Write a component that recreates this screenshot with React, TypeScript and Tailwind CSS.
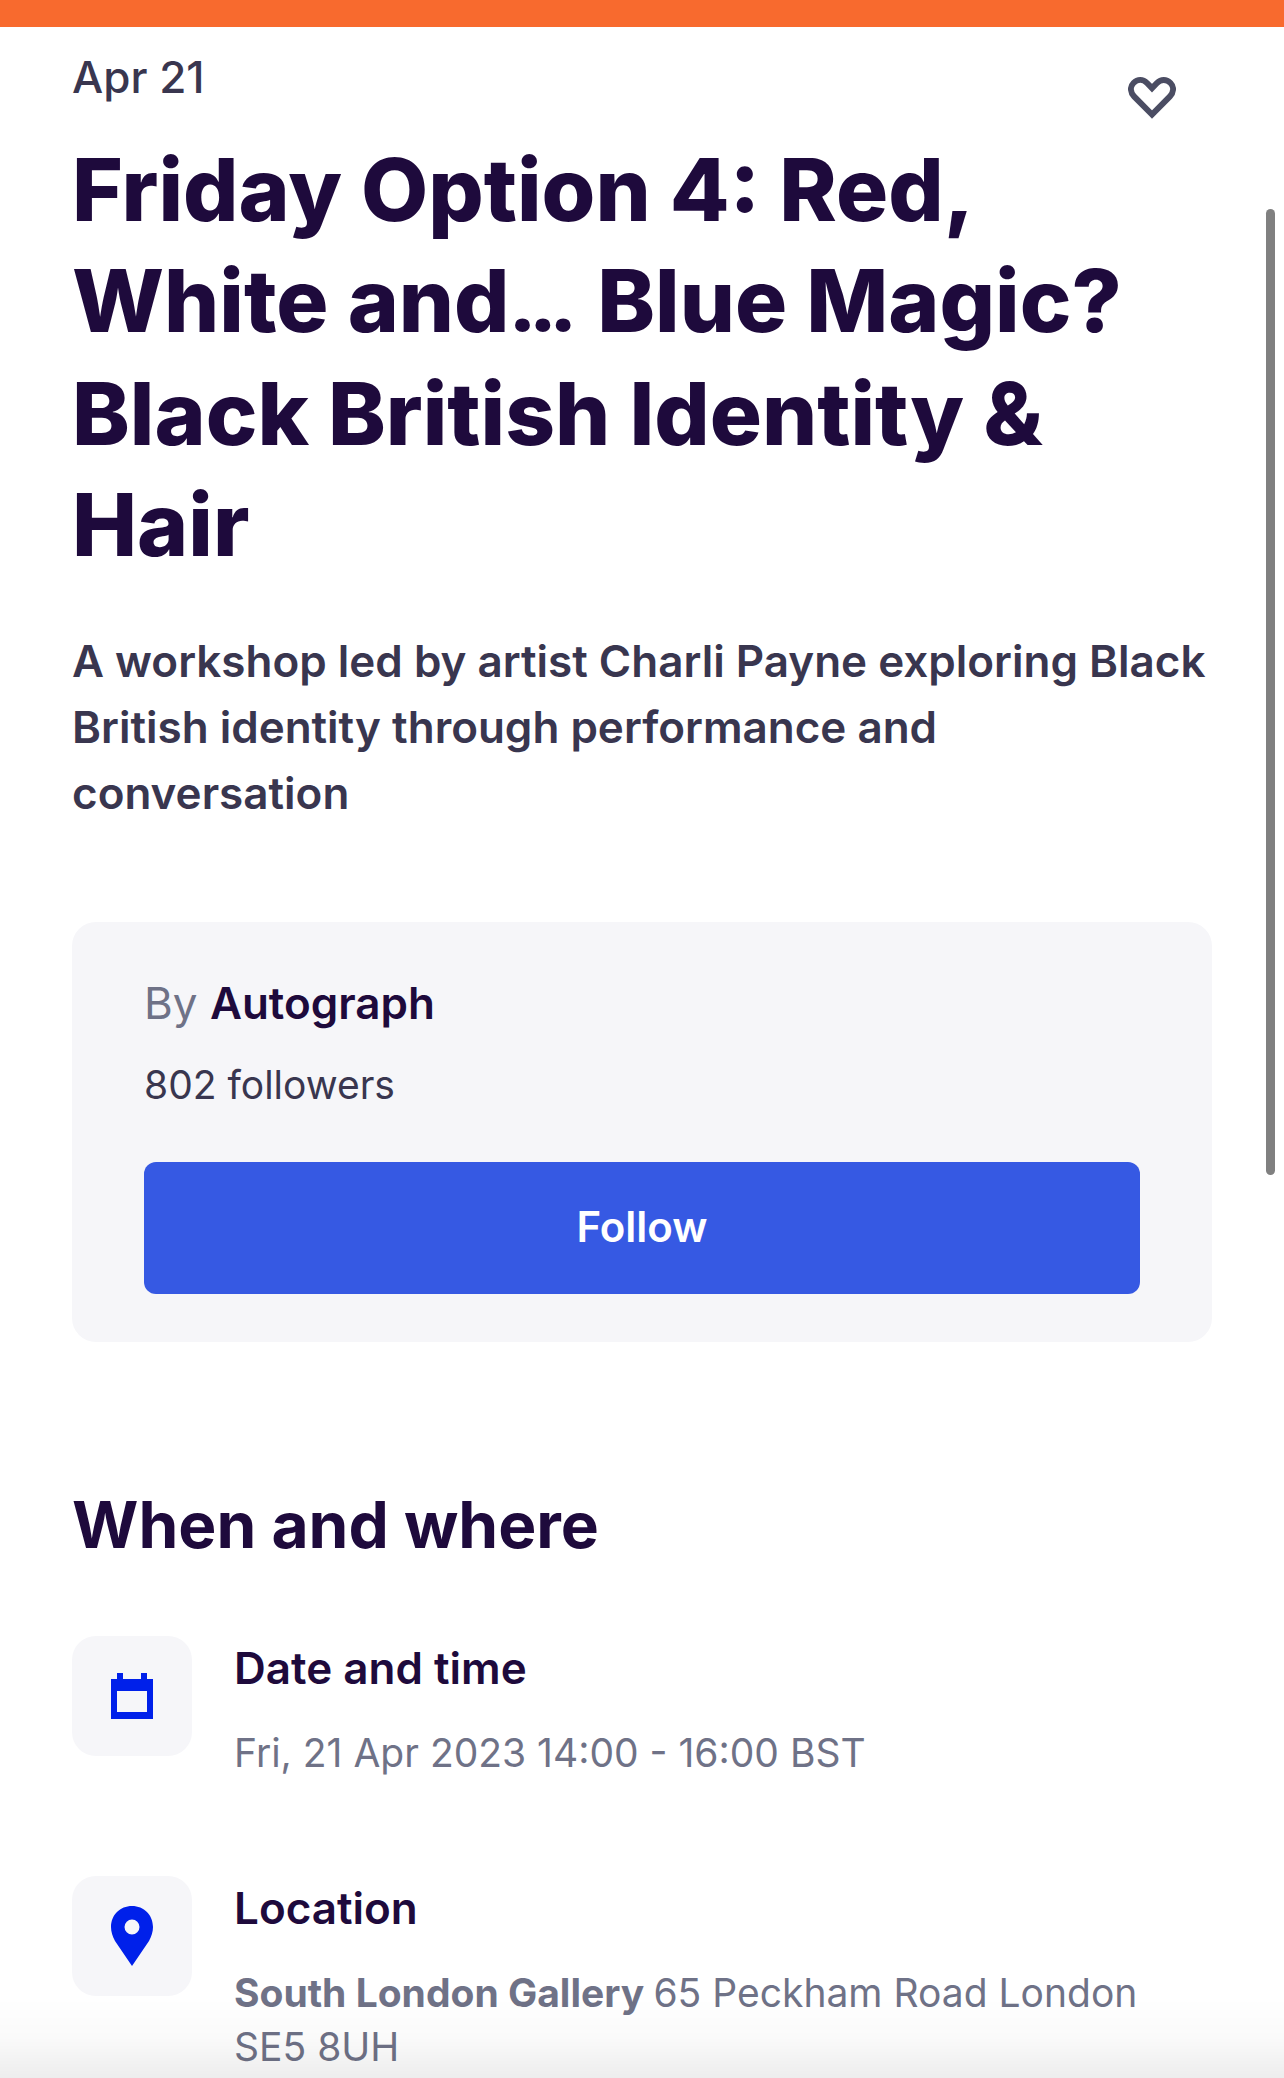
import { useState } from 'react';

type Detail = {
  id: string;
  title: string;
  icon: 'calendar' | 'pin';
  venue?: string;
  text: string;
};

const details: Detail[] = [
  { id: 'date', title: 'Date and time', icon: 'calendar', text: 'Fri, 21 Apr 2023 14:00 - 16:00 BST' },
  { id: 'location', title: 'Location', icon: 'pin', venue: 'South London Gallery', text: '65 Peckham Road London SE5 8UH' },
];

function HeartIcon() {
  return (
    <svg viewBox="0 0 48 42" className="w-12 h-[42px]" fill="none" stroke="#4b4d63" strokeWidth="6" aria-hidden="true">
      <path d="M24 37.500 L6.300 19.700 C2 15 2 9.500 5.500 6 C9.500 2 15 2 19 6 L24 11.200 L29 6 C33 2 38.500 2 42.500 6 C46 9.500 46 15 41.700 19.700 Z" />
    </svg>
  );
}

function CalendarIcon() {
  return (
    <svg viewBox="0 0 42 46" className="w-[42px] h-[46px]" fill="#0020ea" aria-hidden="true">
      <path fillRule="evenodd" d="M0 6H6V0H12V6H30V0H36V6H42V46H0ZM6 18V39H36V18Z" />
    </svg>
  );
}

function PinIcon() {
  return (
    <svg viewBox="0 0 42 60" className="w-[42px] h-[60px]" fill="#0020ea" aria-hidden="true">
      <path fillRule="evenodd" d="M21 0C9 0 0 9 0 21C0 26 1.500 30 4 35L21 60L38 35C40.500 30 42 26 42 21C42 9 33 0 21 0ZM21 13.500A7.500 7.500 0 1 1 21 28.500A7.500 7.500 0 1 1 21 13.500Z" />
    </svg>
  );
}

export default function App() {
  const [liked, setLiked] = useState(false);
  const [following, setFollowing] = useState(false);

  return (
    <div className="relative min-h-screen bg-white font-[Inter,sans-serif] text-[#39364f]">
      <div className="h-[27px] bg-[#f86a2e]" />
      <main className="px-[72px] pt-5">
        <div className="flex items-start justify-between">
          <p className="text-[44px] leading-[60px] font-medium">Apr 21</p>
          <button
            type="button"
            aria-label="Save event"
            aria-pressed={liked}
            onClick={() => setLiked(!liked)}
            className="mt-[30px] mr-9 cursor-pointer"
          >
            <HeartIcon />
          </button>
        </div>
        <h1 className="mt-[15px] text-[87px] leading-[111px] font-extrabold text-[#1e0a3c]">
          Friday Option 4: Red, White and<span className="font-[Roboto,sans-serif]">… </span>Blue Magic? Black British Identity &amp; Hair
        </h1>
        <p className="mt-12 text-[44px] leading-[66px] font-semibold">
          A workshop led by artist Charli Payne exploring Black British identity through performance and conversation
        </p>

        <section className="mt-24 rounded-3xl bg-[#f6f6f9] px-[72px] py-12">
          <p className="text-[44px] leading-[66px] text-[#6f7287]">
            By <a href="#autograph" className="font-semibold text-[#1e0a3c]">Autograph</a>
          </p>
          <p className="mt-5 text-[39px] leading-[58px]">802 followers</p>
          <button
            type="button"
            onClick={() => setFollowing(!following)}
            className="mt-12 h-[132px] w-full rounded-xl bg-[#3659e3] pb-1 text-[42px] font-semibold text-white cursor-pointer"
          >
            {following ? 'Following' : 'Follow'}
          </button>
        </section>

        <section className="mt-36">
          <h2 className="text-[64px] leading-[78px] font-bold text-[#1e0a3c]">When and where</h2>
          <div className="mt-18 flex flex-col gap-24">
            {details.map((item) => (
              <div key={item.id} className="flex items-start gap-[42px]">
                <div className="flex size-[120px] shrink-0 items-center justify-center rounded-3xl bg-[#f6f6f9]">
                  {item.icon === 'calendar' ? <CalendarIcon /> : <PinIcon />}
                </div>
                <div>
                  <h3 className="text-[44px] leading-[64px] font-semibold text-[#1e0a3c]">{item.title}</h3>
                  <p className="mt-[26px] text-[39px] leading-[54px] text-[#6f7287]">
                    {item.venue && <strong className="font-bold">{item.venue} </strong>}
                    {item.text}
                  </p>
                </div>
              </div>
            ))}
          </div>
        </section>
      </main>
      {/* shade from the bottom bar */}
      <div className="pointer-events-none fixed inset-x-0 bottom-0 h-20 bg-linear-to-t from-black/7 via-black/2 to-transparent" />
      <div className="absolute top-[209px] right-[9px] h-[966px] w-[9px] rounded-full bg-[#808080]" />
    </div>
  );
}
